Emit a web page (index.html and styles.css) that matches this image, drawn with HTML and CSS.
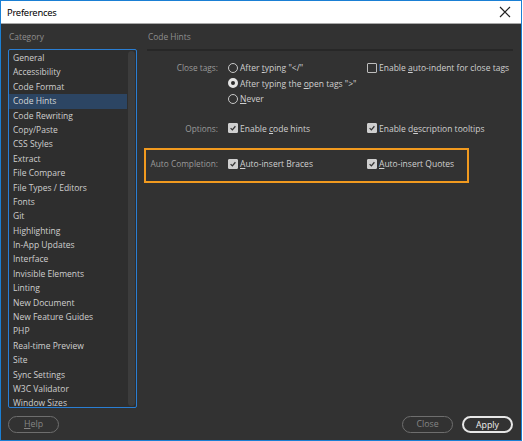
FILE: index.html
```html
<!DOCTYPE html>
<html>
<head>
<meta charset="utf-8">
<link rel="stylesheet" href="styles.css">
</head>
<body>
<div class="window">
  <div class="titlebar">
    <span class="title">Preferences</span>
    <svg class="close-x" width="12" height="12" viewBox="0 0 12 12"><path d="M1 1 L11 11 M11 1 L1 11" stroke="#222" stroke-width="1.2" fill="none"/></svg>
  </div>
  <div class="body">
    <div class="main">
      <div class="sidebar">
        <div class="section-label">Category</div>
        <div class="listbox">
          <ul class="list">
            <li>General</li>
            <li>Accessibility</li>
            <li>Code Format</li>
            <li class="selected">Code Hints</li>
            <li>Code Rewriting</li>
            <li>Copy/Paste</li>
            <li>CSS Styles</li>
            <li>Extract</li>
            <li>File Compare</li>
            <li>File Types / Editors</li>
            <li>Fonts</li>
            <li>Git</li>
            <li>Highlighting</li>
            <li>In-App Updates</li>
            <li>Interface</li>
            <li>Invisible Elements</li>
            <li>Linting</li>
            <li>New Document</li>
            <li>New Feature Guides</li>
            <li>PHP</li>
            <li>Real-time Preview</li>
            <li>Site</li>
            <li>Sync Settings</li>
            <li>W3C Validator</li>
            <li>Window Sizes</li>
          </ul>
          <div class="scrollbar"><div class="thumb"></div></div>
        </div>
      </div>
      <div class="content">
        <div class="section-label heading">Code Hints</div>
        <div class="rule"></div>
        <div class="grid close-tags">
          <div class="label">Close tags:</div>
          <div class="stack">
            <div class="opt"><span class="radio"></span><span>After <u>t</u>yping "&lt;/"</span></div>
            <div class="opt"><span class="radio on"></span><span>After typing the <u>o</u>pen tags "&gt;"</span></div>
            <div class="opt"><span class="radio"></span><span><u>N</u>ever</span></div>
          </div>
          <div class="opt"><span class="check"></span><span>Enable <u>a</u>uto-indent for close tags</span></div>
        </div>
        <div class="grid options">
          <div class="label">Options:</div>
          <div class="opt"><span class="check on"><svg viewBox="0 0 10 10"><path d="M2 5.2 L4.2 7.4 L8 2.8" stroke="#333" stroke-width="1.6" fill="none"/></svg></span><span>Enable <u>c</u>ode hints</span></div>
          <div class="opt"><span class="check on"><svg viewBox="0 0 10 10"><path d="M2 5.2 L4.2 7.4 L8 2.8" stroke="#333" stroke-width="1.6" fill="none"/></svg></span><span>Enable d<u>e</u>scription tooltips</span></div>
        </div>
        <div class="grid highlight">
          <div class="label">Auto Completion:</div>
          <div class="opt"><span class="check on"><svg viewBox="0 0 10 10"><path d="M2 5.2 L4.2 7.4 L8 2.8" stroke="#333" stroke-width="1.6" fill="none"/></svg></span><span><u>A</u>uto-insert Braces</span></div>
          <div class="opt"><span class="check on"><svg viewBox="0 0 10 10"><path d="M2 5.2 L4.2 7.4 L8 2.8" stroke="#333" stroke-width="1.6" fill="none"/></svg></span><span><u>A</u>uto-insert Quotes</span></div>
        </div>
      </div>
    </div>
    <div class="footer">
      <button class="btn"><u>H</u>elp</button>
      <div class="spacer"></div>
      <button class="btn">Close</button>
      <button class="btn primary">Apply</button>
    </div>
  </div>
</div>
</body>
</html>
```
FILE: styles.css
```css
* { box-sizing: border-box; }
html, body { margin: 0; padding: 0; }
body {
  width: 523px;
  height: 441px;
  overflow: hidden;
  background: #ffffff;
  font-family: "Open Sans", "Noto Sans", sans-serif;
}
.window {
  width: 522px;
  height: 441px;
  border: 1px solid #1a7fd4;
  display: flex;
  flex-direction: column;
  background: #323232;
}
.titlebar {
  height: 23px;
  flex: none;
  background: #ffffff;
  border-bottom: 1px solid #a8a8a8;
  display: flex;
  align-items: center;
  justify-content: space-between;
  padding: 0 10px 0 6px;
}
.title {
  font-family: "Noto Sans", "Open Sans", sans-serif;
  font-size: 9.4px;
  letter-spacing: -0.25px;
  color: #000;
}
.close-x { display: block; }
.body {
  flex: 1;
  display: flex;
  flex-direction: column;
  padding: 0 8px 0 7px;
}
.main {
  flex: 1;
  display: flex;
  gap: 10px;
}
.sidebar {
  width: 129px;
  flex: none;
  display: flex;
  flex-direction: column;
}
.section-label {
  font-size: 8.4px;
  color: #8f8f8f;
  height: 25px;
  line-height: 26px;
  padding-left: 1px;
}
.listbox {
  height: 359px;
  border: 1px solid #2a7ed3;
  border-radius: 2px;
  background: #2e2e2e;
  display: flex;
  overflow: hidden;
}
.list {
  list-style: none;
  margin: 0;
  padding: 1px 0 0 0;
  flex: 1;
}
.list li {
  height: 14.4px;
  line-height: 14.4px;
  font-size: 8.5px;
  color: #cfcfcf;
  padding-left: 4px;
  white-space: nowrap;
}
.list li.selected {
  background: #2c4563;
  color: #d6d6d6;
}
.scrollbar {
  width: 9px;
  padding: 1px;
  display: flex;
}
.thumb {
  flex: 1;
  background: #3c3c3c;
  border-radius: 4px;
}
.content {
  flex: 1;
  min-width: 0;
  display: flex;
  flex-direction: column;
}
.rule {
  height: 2px;
  background: #272727;
  margin-bottom: 9px;
}
.grid {
  display: grid;
  grid-template-columns: 71px 129px auto;
  column-gap: 10px;
  font-size: 8.5px;
  color: #cfcfcf;
  align-items: start;
}
.label {
  text-align: right;
  color: #9a9a9a;
  font-size: 8.3px;
  line-height: 15.5px;
  white-space: nowrap;
}
.stack { display: flex; flex-direction: column; }
.opt {
  display: flex;
  align-items: center;
  height: 15.5px;
  white-space: nowrap;
}
.opt u { text-underline-offset: 1px; }
.radio {
  width: 10px;
  height: 10px;
  border: 1px solid #c8c8c8;
  border-radius: 50%;
  margin-right: 2px;
  flex: none;
}
.radio.on {
  border: 3px solid #e4e4e4;
  background: #2a2a2a;
}
.check {
  width: 10px;
  height: 10px;
  border: 1px solid #bdbdbd;
  border-radius: 1px;
  margin-right: 2px;
  flex: none;
  display: flex;
}
.check.on {
  background: #cfcfcf;
  border-color: #cfcfcf;
}
.check svg { width: 100%; height: 100%; display: block; }
.close-tags { margin-top: 0; }
.options { margin-top: 14px; }
.highlight {
  margin-top: 12px;
  margin-left: -3px;
  width: 325px;
  border: 2px solid #f19a1f;
  padding: 6px 0 9px 1px;
}
.footer {
  height: 33px;
  display: flex;
  align-items: center;
  gap: 9px;
  flex: none;
}
.spacer { flex: 1; }
.btn {
  width: 51px;
  height: 17px;
  border-radius: 9px;
  border: 1px solid #6e6e6e;
  background: transparent;
  color: #858585;
  font-family: "Open Sans", "Noto Sans", sans-serif;
  font-size: 8.8px;
  padding: 0;
  line-height: 15px;
}
.btn.primary {
  border: 2px solid #e6e6e6;
  color: #f0f0f0;
}
```
